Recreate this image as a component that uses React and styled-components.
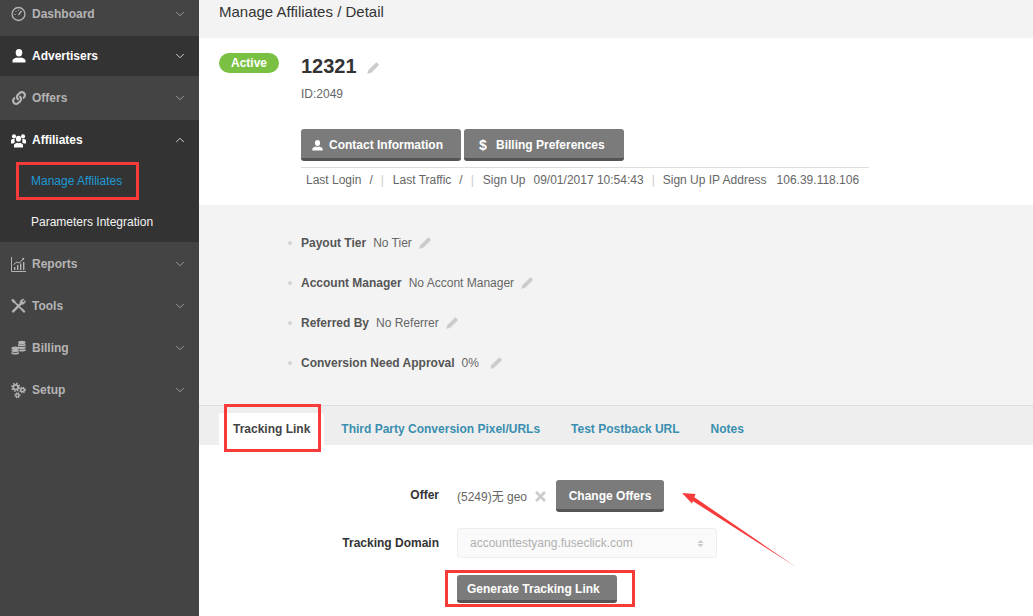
import React from 'react'
import styled, { createGlobalStyle } from 'styled-components'
import { FaLink, FaTimes, FaSort } from 'react-icons/fa'
import { ChevronDown, ChevronUp } from 'lucide-react'

const GlobalStyle = createGlobalStyle`
    html, body {
        margin: 0;
        height: 616px;
        overflow: hidden;
        background: #fff;
        font-family: 'Liberation Sans', Arial, 'Noto Sans CJK SC', sans-serif;
        font-size: 12px;
    }
`

const Page = styled.div`
    position: relative;
    display: flex;
    width: 1033px;
    height: 616px;
    overflow: hidden;
`

const Sidebar = styled.nav`
    flex: 0 0 199px;
    background: #444;
`

const NavGroup = styled.div`
    background: ${({ $dark }) => ($dark ? '#333' : '#444')};
    padding-bottom: ${({ $pad }) => $pad || 0}px;
`

const NavRow = styled.div`
    display: flex;
    align-items: center;
    height: ${({ $h }) => $h || 42}px;
    padding: 0 12px 0 11px;
    margin-top: ${({ $mt }) => $mt || 0}px;
    margin-bottom: ${({ $mb }) => $mb || 0}px;
    color: ${({ $active }) => ($active ? '#fff' : '#b4b4b4')};
    font-weight: 700;
`

const NavIcon = styled.span`
    display: flex;
    justify-content: center;
    width: 15px;
    margin-right: 6px;
    font-size: 14px;
`

const NavLabel = styled.span`
    flex: 1;
`

const Chevron = styled.span`
    display: flex;
    color: ${({ $active }) => ($active ? '#ddd' : '#a0a0a0')};
`

const SubItem = styled.div`
    height: ${({ $h }) => $h || 41}px;
    padding-left: 31px;
    line-height: 41px;
    color: ${({ $current }) => ($current ? '#1d9ad6' : '#f4f4f4')};
`

const Main = styled.main`
    flex: 1;
    min-width: 0;
`

const Header = styled.header`
    height: 38px;
    padding: 3px 20px 0;
    box-sizing: border-box;
    background: #f3f3f3;
    color: #333;
    font-size: 15px;
    line-height: 18px;
`

const Profile = styled.section`
    display: flex;
    height: 167px;
    padding: 15px 0 0 20px;
    box-sizing: border-box;
    background: #fff;
`

const StatusBadge = styled.span`
    width: 60px;
    height: 20px;
    border-radius: 10px;
    background: #7ac143;
    color: #fff;
    font-weight: 700;
    line-height: 20px;
    text-align: center;
`

const ProfileBody = styled.div`
    width: 568px;
    margin-left: 22px;
`

const Name = styled.h1`
    display: flex;
    align-items: center;
    gap: 10px;
    margin: 1px 0 0;
    height: 24px;
    color: #333;
    font-size: 20px;
    line-height: 24px;

    svg {
        margin-top: 3px;
    }
`

const PencilSvg = styled.svg`
    flex: none;
    width: 12px;
    height: 12px;
    fill: #ccc;
`

const IdText = styled.div`
    margin-top: 9px;
    height: 14px;
    color: #666;
    line-height: 14px;
`

const ButtonRow = styled.div`
    display: flex;
    gap: 3px;
    margin-top: 28px;
    padding-bottom: 6px;
    border-bottom: 1px solid #ddd;
`

const Button = styled.button`
    display: flex;
    align-items: center;
    justify-content: ${({ $center }) => ($center ? 'center' : 'flex-start')};
    width: ${({ $w }) => $w}px;
    height: ${({ $h }) => $h || 32}px;
    padding: 3px ${({ $px }) => $px ?? 10}px 0;
    box-sizing: border-box;
    border: 0;
    border-bottom: 3px solid #555;
    border-radius: 3px;
    background: #7b7b7b;
    color: #fff;
    font: 700 12px 'Liberation Sans', Arial, sans-serif;
`

const ButtonIcon = styled.span`
    display: flex;
    justify-content: center;
    width: 12px;
    margin-right: ${({ $gap }) => $gap || 6}px;
    font-size: ${({ $size }) => $size || 11}px;
`

const MetaRow = styled.div`
    display: flex;
    align-items: center;
    height: 24px;
    padding-left: 5px;
    color: #666;
`

const MetaItem = styled.span`
    margin-right: ${({ $gap }) => $gap || 8}px;
    white-space: pre;
`

const MetaSep = styled.span`
    margin-right: ${({ $gap }) => $gap || 9}px;
    color: #ccc;
`

const InfoSection = styled.section`
    height: 200px;
    padding: 18px 0 0 89px;
    box-sizing: border-box;
    background: #f3f3f3;
`

const InfoRow = styled.div`
    display: flex;
    align-items: center;
    height: 40px;
    color: #666;
`

const Bullet = styled.span`
    width: 4px;
    height: 4px;
    margin-right: 9px;
    border-radius: 50%;
    background: #d4d4d4;
`

const InfoLabel = styled.strong`
    margin-right: 7px;
    color: #555;
`

const InfoValue = styled.span`
    margin-right: ${({ $gap }) => $gap || 7}px;
`

const TabBar = styled.div`
    display: flex;
    align-items: flex-end;
    height: 40px;
    padding-left: 20px;
    box-sizing: border-box;
    border-top: 1px solid #ddd;
    background: #eee;
`

const Tab = styled.div`
    height: 32px;
    margin-right: ${({ $gap }) => $gap || 0}px;
    padding: 0 14px;
    border-radius: 3px 3px 0 0;
    background: ${({ $active }) => ($active ? '#fff' : 'transparent')};
    color: ${({ $active }) => ($active ? '#444' : '#3a8fb0')};
    font-weight: 700;
    line-height: 33px;
`

const Form = styled.section`
    display: grid;
    grid-template-columns: 240px 1fr;
    column-gap: 18px;
    padding-top: 35px;
    background: #fff;
`

const FormLabel = styled.label`
    padding-top: ${({ $top }) => $top || 0}px;
    color: #333;
    font-weight: 700;
    text-align: right;
`

const OfferRow = styled.div`
    display: flex;
    align-items: center;
    height: 32px;
    margin-bottom: 16px;
    color: #666;
`

const OfferName = styled.span`
    margin-bottom: 2px;
`

const RemoveIcon = styled(FaTimes)`
    margin: 0 8px 0 6px;
    color: #ccc;
    font-size: 15px;
`

const SelectBox = styled.div`
    display: flex;
    align-items: center;
    justify-content: space-between;
    width: 260px;
    height: 30px;
    margin-bottom: 17px;
    padding: 0 11px 0 12px;
    box-sizing: border-box;
    border: 1px solid #eee;
    border-radius: 3px;
    background: #fafafa;
    color: #b0b0b0;
`

const SortIcon = styled(FaSort)`
    color: #ccc;
    font-size: 9px;
`

/* review marks drawn over the screenshot */
const Mark = styled.div`
    position: absolute;
    left: ${({ $x }) => $x}px;
    top: ${({ $y }) => $y}px;
    width: ${({ $w }) => $w}px;
    height: ${({ $h }) => $h}px;
    box-sizing: border-box;
    border: 3px solid #f73a3a;
`

const ArrowSvg = styled.svg`
    position: absolute;
    left: 675px;
    top: 485px;
`

const Pencil = () => (
    <PencilSvg viewBox="0 0 12 12">
        <path d="M.3 11.7l.9-3.4L8.6.9c.5-.5 1.1-.5 1.6 0l1.2 1.2c.5.5.5 1.1 0 1.6L4 11.1z" />
    </PencilSvg>
)

const GaugeIcon = () => (
    <svg width="16" height="16" viewBox="0 0 16 16" fill="none" stroke="currentColor">
        <circle cx="8" cy="8" r="6.9" strokeWidth="1.4" />
        <path d="M8 9L11.2 4.8" strokeWidth="1.5" />
        <path d="M3.5 8.5h1.4M4.8 4.8l1 1M8 3.2v1.4" strokeWidth="1" />
    </svg>
)

const PersonIcon = ({ size = 14 }) => (
    <svg width={size} height={size} viewBox="0 0 14 14" fill="currentColor">
        <ellipse cx="7" cy="3.8" rx="3.3" ry="3.7" />
        <path d="M0.5 13.5v-2.2c0-1.4 2.2-2.2 4.2-2.9.8.6 3.8.6 4.6 0 2 .7 4.2 1.5 4.2 2.9v2.2z" />
    </svg>
)

const GroupIcon = () => (
    <svg width="15" height="15" viewBox="0 0 15 15" fill="currentColor">
        <circle cx="3" cy="3.4" r="2.1" />
        <circle cx="12" cy="3.4" r="2.1" />
        <path d="M0 10.5V7.6c0-1 1-1.6 2.8-1.6.4 0 .8 0 1 .1-.3.7-.4 2 .1 3.3-.8.3-1.3.7-1.6 1.1zM15 10.5V7.6c0-1-1-1.6-2.8-1.6-.4 0-.8 0-1 .1.3.7.4 2-.1 3.3.8.3 1.3.7 1.6 1.1z" />
        <ellipse cx="7.5" cy="5.8" rx="2.6" ry="3" />
        <path d="M3 14.5v-2.3c0-1.2 1.6-1.9 3-2.4.6.5 2.4.5 3 0 1.4.5 3 1.2 3 2.4v2.3z" />
    </svg>
)

const ReportsIcon = () => (
    <svg width="15" height="15" viewBox="0 0 15 15" fill="currentColor">
        <path d="M.5 0v14.5H15" fill="none" stroke="currentColor" />
        <path d="M3 10h1.4v3H3zM6 8h1.4v5H6zM9 6.5h1.4V13H9zM12 5h1.4v8H12z" />
        <path d="M2.5 7.5L6 5l2.5 1L12 2" fill="none" stroke="currentColor" />
        <path d="M10.8 1.2L13.2.8l-.4 2.4z" />
    </svg>
)

const ToolsIcon = () => (
    <svg width="16" height="16" viewBox="0 0 16 16" fill="none" stroke="currentColor">
        <path d="M1.5 14.5L10.5 5.5" strokeWidth="2.4" />
        <path d="M9.8 5.2C9.2 3 11 .6 13.8.8L11.8 3l1.2 1.2 2.2-2c.3 2.8-2.2 4.6-4.4 3.9z" fill="currentColor" strokeWidth=".8" />
        <path d="M3 3L14 14" strokeWidth="1.8" />
        <path d="M.6 1.8L1.8.6 4.4 2.6 3.8 3.8 2.6 4.4z" fill="currentColor" strokeWidth=".6" />
        <path d="M10.5 11.8l1.3-1.3 3.6 3.4-1.5 1.5z" fill="currentColor" stroke="none" />
    </svg>
)

const CoinsIcon = () => (
    <svg width="16" height="16" viewBox="0 0 16 16" fill="currentColor">
        <ellipse cx="11.5" cy="2.2" rx="4" ry="1.9" />
        <path d="M7.5 3.4c.8 1 7.2 1 8 0v2c-.8 1-7.2 1-8 0zM7.5 6.2c.8 1 7.2 1 8 0v2c-.8 1-7.2 1-8 0zM9 9.4c2 .4 5.5.3 6.5-.4v2c-.6.8-4 1-6.5.6z" />
        <ellipse cx="4.5" cy="8.2" rx="4" ry="1.9" />
        <path d="M.5 9.5c.8 1 7.2 1 8 0v2c-.8 1-7.2 1-8 0zM.5 12.2c.8 1 7.2 1 8 0v1.6c-.8 1.6-7.2 1.6-8 0z" />
    </svg>
)

const GearsIcon = () => (
    <svg width="16" height="17" viewBox="0 0 16 17" fill="none" stroke="currentColor">
        <circle cx="5" cy="5" r="2.6" strokeWidth="1.9" />
        <circle cx="5" cy="5" r="4.2" strokeWidth="1.6" strokeDasharray="1.6 1.7" />
        <circle cx="12.3" cy="8" r="1.9" strokeWidth="1.6" />
        <circle cx="12.3" cy="8" r="3" strokeWidth="1.2" strokeDasharray="1.2 1.2" />
        <circle cx="6.8" cy="13.6" r="1.7" strokeWidth="1.5" />
        <circle cx="6.8" cy="13.6" r="2.7" strokeWidth="1.1" strokeDasharray="1.1 1.1" />
    </svg>
)

const navTop = [
    { label: 'Dashboard', icon: <GaugeIcon />, h: 28, pad: 8 },
    { label: 'Advertisers', icon: <PersonIcon />, h: 40, active: true, dark: true },
    { label: 'Offers', icon: <FaLink />, h: 44 },
]

const navBottom = [
    { label: 'Reports', icon: <ReportsIcon />, mt: 1 },
    { label: 'Tools', icon: <ToolsIcon /> },
    { label: 'Billing', icon: <CoinsIcon /> },
    { label: 'Setup', icon: <GearsIcon /> },
]

const infoRows = [
    { label: 'Payout Tier', value: 'No Tier' },
    { label: 'Account Manager', value: 'No Accont Manager' },
    { label: 'Referred By', value: 'No Referrer' },
    { label: 'Conversion Need Approval', value: '0%', gap: 11 },
]

function NavItem({ label, icon, h, active, open, mt, mb }) {
    const ChevronIcon = open ? ChevronUp : ChevronDown
    return (
        <NavRow $h={h} $active={active} $mt={mt} $mb={mb}>
            <NavIcon>{icon}</NavIcon>
            <NavLabel>{label}</NavLabel>
            <Chevron $active={active}><ChevronIcon size={14} strokeWidth={1.6} /></Chevron>
        </NavRow>
    )
}

export default function App() {
    return (
        <Page>
            <GlobalStyle />
            <Sidebar>
                {navTop.map(item => (
                    <NavGroup key={item.label} $dark={item.dark} $pad={item.pad}>
                        <NavItem label={item.label} icon={item.icon} h={item.h} active={item.active} />
                    </NavGroup>
                ))}
                <NavGroup $dark>
                    <NavItem label="Affiliates" icon={<GroupIcon />} h={40} mb={1} active open />
                    <SubItem $current>Manage Affiliates</SubItem>
                    <SubItem $h={40}>Parameters Integration</SubItem>
                </NavGroup>
                {navBottom.map(item => (
                    <NavItem key={item.label} label={item.label} icon={item.icon} mt={item.mt} />
                ))}
            </Sidebar>
            <Main>
                <Header>Manage Affiliates / Detail</Header>
                <Profile>
                    <StatusBadge>Active</StatusBadge>
                    <ProfileBody>
                        <Name>12321 <Pencil /></Name>
                        <IdText>ID:2049</IdText>
                        <ButtonRow>
                            <Button $w={160}><ButtonIcon><PersonIcon size={11} /></ButtonIcon>Contact Information</Button>
                            <Button $w={160} $px={13}><ButtonIcon $size={14} $gap={7}>$</ButtonIcon>Billing Preferences</Button>
                        </ButtonRow>
                        <MetaRow>
                            <MetaItem>Last Login</MetaItem>
                            <MetaItem>/</MetaItem>
                            <MetaSep>|</MetaSep>
                            <MetaItem>Last Traffic</MetaItem>
                            <MetaItem>/</MetaItem>
                            <MetaSep>|</MetaSep>
                            <MetaItem>Sign Up</MetaItem>
                            <MetaItem>09/01/2017 10:54:43</MetaItem>
                            <MetaSep $gap={8}>|</MetaSep>
                            <MetaItem $gap={10}>Sign Up IP Address</MetaItem>
                            <MetaItem>106.39.118.106</MetaItem>
                        </MetaRow>
                    </ProfileBody>
                </Profile>
                <InfoSection>
                    {infoRows.map(row => (
                        <InfoRow key={row.label}>
                            <Bullet />
                            <InfoLabel>{row.label}</InfoLabel>
                            <InfoValue $gap={row.gap}>{row.value}</InfoValue>
                            <Pencil />
                        </InfoRow>
                    ))}
                </InfoSection>
                <TabBar>
                    <Tab $active $gap={3}>Tracking Link</Tab>
                    <Tab $gap={3}>Third Party Conversion Pixel/URLs</Tab>
                    <Tab $gap={3}>Test Postback URL</Tab>
                    <Tab>Notes</Tab>
                </TabBar>
                <Form>
                    <FormLabel $top={8}>Offer</FormLabel>
                    <OfferRow>
                        <OfferName>(5249)无 geo</OfferName>
                        <RemoveIcon />
                        <Button $w={108} $center>Change Offers</Button>
                    </OfferRow>
                    <FormLabel $top={8}>Tracking Domain</FormLabel>
                    <SelectBox>accounttestyang.fuseclick.com<SortIcon /></SelectBox>
                    <span />
                    <Button $w={160} $h={28}>Generate Tracking Link</Button>
                </Form>
            </Main>
            <Mark $x={16} $y={162} $w={123} $h={38} />
            <Mark $x={224} $y={404} $w={97} $h={48} />
            <Mark $x={445} $y={570} $w={190} $h={37} />
            <ArrowSvg width="125" height="90" viewBox="0 0 125 90">
                <path d="M121 82L19 12L17 15.5z" fill="#f73a3a" />
                <path d="M7 8L20.5 9L17 18.5z" fill="#f73a3a" />
            </ArrowSvg>
        </Page>
    )
}
